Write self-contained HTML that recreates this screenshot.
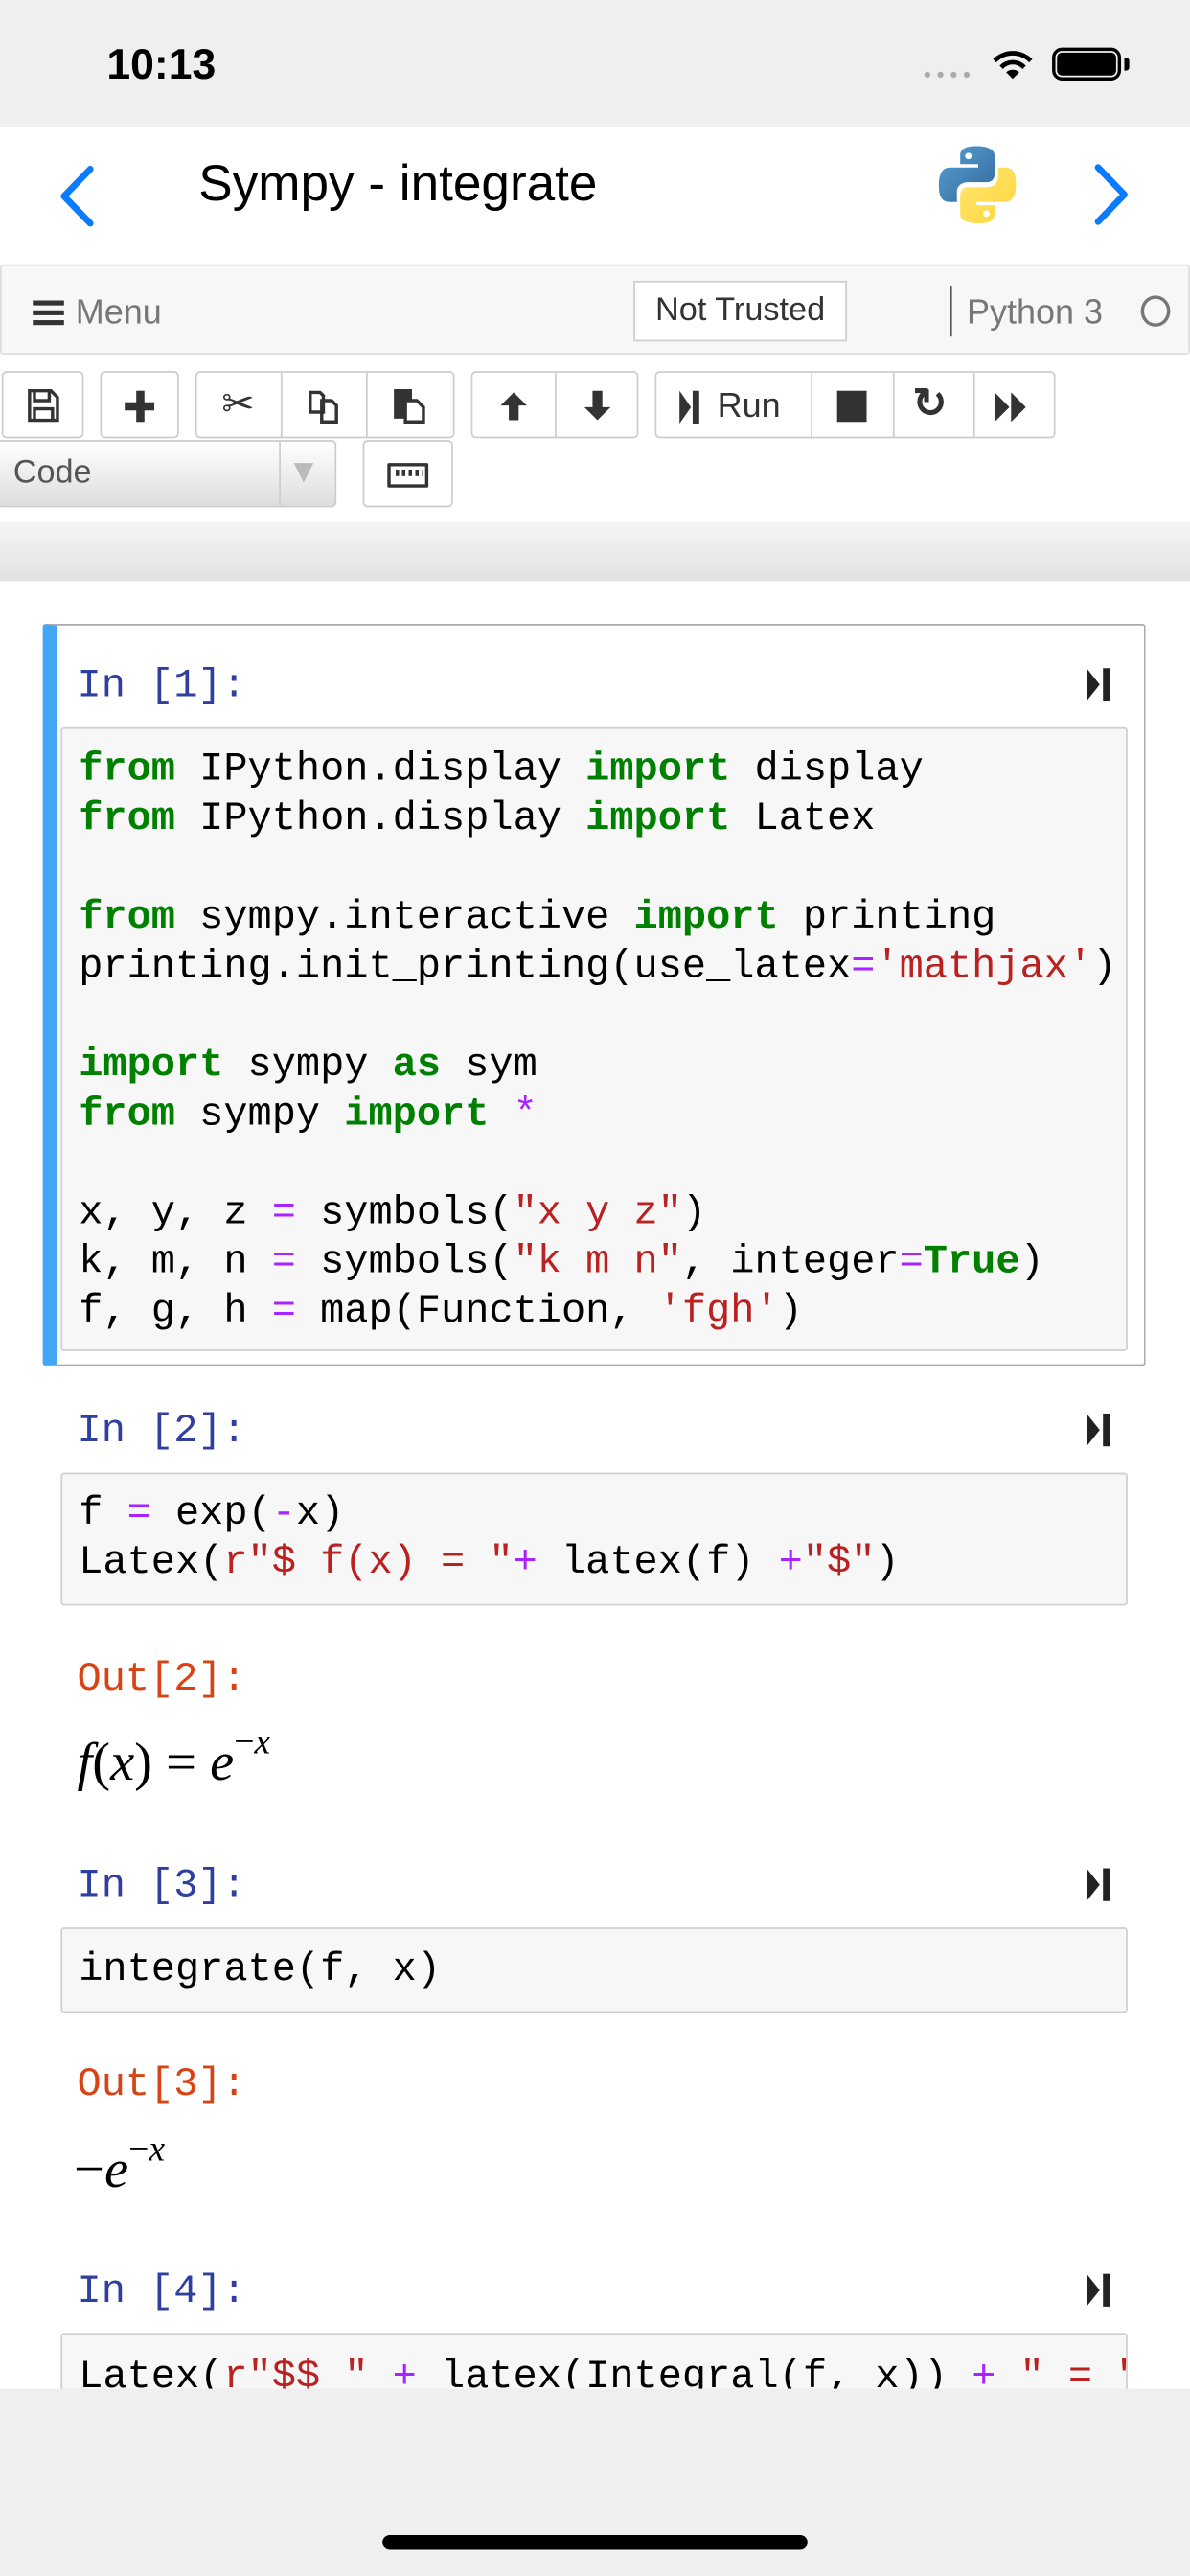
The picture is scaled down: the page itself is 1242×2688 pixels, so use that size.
<!DOCTYPE html>
<html><head><meta charset="utf-8"><style>
*{margin:0;padding:0;box-sizing:border-box}
html,body{width:1242px;height:2688px;overflow:hidden;background:#fff}
#w{position:absolute;left:0;top:0;width:725px;height:1569px;transform:scale(1.71310);transform-origin:0 0;font-family:"Liberation Sans",sans-serif;background:#fff}
.a{position:absolute}
.m{font-family:"Liberation Mono",monospace;font-size:24.5px;white-space:pre;line-height:30px}
.k{color:#008000;font-weight:bold}.s{color:#ba2121}.o{color:#aa22ff}
.pin{color:#303f9f}.pout{color:#d84315}
.btn{position:absolute;top:226px;height:41px;border:1px solid #ccc;border-radius:3px;background:#fff}
.sep{position:absolute;top:0;bottom:0;width:1px;background:#ccc}
.code{position:absolute;left:37px;right:38px;background:#f7f7f7;border:1px solid #cfcfcf;border-radius:2px}
.math{font-family:"Liberation Serif",serif;font-style:italic;font-size:33px}
</style></head><body><div id="w">
<div class="a" style="left:0;top:0;width:725px;height:77px;background:#efefef"></div>
<div class="a" style="left:65px;top:24px;font-size:26px;font-weight:bold;color:#000">10:13</div>
<div class="a" style="left:561px;top:43px;width:32px;height:5px;background:radial-gradient(circle,#aaa 1.6px,transparent 2px) 0 0/8px 5px"></div>
<svg class="a" style="left:602px;top:28px" width="30" height="22" viewBox="0 0 30 22"><path d="M15 20 L11 16 A6 6 0 0 1 19 16Z M7 12 A11 11 0 0 1 23 12 L21 14 A8 8 0 0 0 9 14Z M3 8 A17 17 0 0 1 27 8 L25 10 A14 14 0 0 0 5 10Z" fill="#000"/></svg>
<div class="a" style="left:641px;top:29px;width:42px;height:20px;border:2px solid #000;border-radius:6px"></div>
<div class="a" style="left:644px;top:32px;width:36px;height:14px;background:#000;border-radius:3px"></div>
<div class="a" style="left:685px;top:35px;width:3px;height:8px;background:#000;border-radius:0 2px 2px 0"></div>
<svg class="a" style="left:34px;top:100px" width="26" height="40" viewBox="0 0 26 40"><path d="M21 3 L5 19.5 L21 36" fill="none" stroke="#0a7aff" stroke-width="4" stroke-linecap="round" stroke-linejoin="round"/></svg>
<div class="a" style="left:121px;top:94px;font-size:31px;color:#000">Sympy - integrate</div>
<svg class="a" style="left:571px;top:88px" width="49" height="49" viewBox="0 0 49 49"><defs><linearGradient id="b" x1="0" y1="0" x2="1" y2="1"><stop offset="0" stop-color="#5a9fd4"/><stop offset="1" stop-color="#306998"/></linearGradient><linearGradient id="y" x1="0" y1="0" x2="1" y2="1"><stop offset="0" stop-color="#ffe873"/><stop offset="1" stop-color="#ffd43b"/></linearGradient></defs><path d="M24 1 C14 1 14 5 14 7 V12 H25 V14 H8 C3 14 1 18 1 25 C1 32 3 35 8 35 H12 V29 C12 25 15 23 19 23 H30 C33 23 35 21 35 18 V7 C35 3 31 1 24 1Z" fill="url(#b)"/><circle cx="19" cy="7" r="2" fill="#fff"/><path d="M25 48 C35 48 35 44 35 42 V37 H24 V35 H41 C46 35 48 31 48 24 C48 17 46 14 41 14 H37 V20 C37 24 34 26 30 26 H19 C16 26 14 28 14 31 V42 C14 46 18 48 25 48Z" fill="url(#y)"/><circle cx="30" cy="42" r="2" fill="#fff"/></svg>
<svg class="a" style="left:664px;top:98px" width="28" height="42" viewBox="0 0 28 42"><path d="M5 4 L21 20.5 L5 37" fill="none" stroke="#0a7aff" stroke-width="4" stroke-linecap="round" stroke-linejoin="round"/></svg>
<div class="a" style="left:0;top:161px;width:725px;height:55px;background:#f7f7f7;border:1px solid #ddd;border-radius:2px"></div>
<div class="a" style="left:20px;top:183px;width:19px;height:3px;background:#333;box-shadow:0 6px 0 #333,0 12px 0 #333"></div>
<div class="a" style="left:46px;top:179px;font-size:21px;color:#777">Menu</div>
<div class="a" style="left:386px;top:171px;width:130px;height:37px;background:#fff;border:1px solid #ccc;font-size:20px;color:#333;text-align:center;line-height:35px">Not Trusted</div>
<div class="a" style="left:579px;top:174px;width:1px;height:31px;background:#555"></div>
<div class="a" style="left:589px;top:179px;font-size:21px;color:#777">Python 3</div>
<div class="a" style="left:695px;top:180px;width:18px;height:19px;border:2.5px solid #777;border-radius:50%"></div>
<div class="btn" style="left:1px;width:50px"><svg style="position:absolute;left:13px;top:9px" width="22" height="22" viewBox="0 0 22 22"><path d="M3 2 H16 L20 6 V20 H3Z M6 2 V8 H15 V2 M6 20 V13 H17 V20" fill="none" stroke="#333" stroke-width="2"/></svg></div>
<div class="btn" style="left:61px;width:48px"><div class="a" style="left:14px;top:18px;width:18px;height:5px;background:#333"></div><div class="a" style="left:20.5px;top:11px;width:5px;height:19px;background:#333"></div></div>
<div class="btn" style="left:119px;width:158px"><div class="sep" style="left:51px"></div><div class="sep" style="left:103px"></div>
<div class="a" style="left:15px;top:5px;font-size:24px;color:#333">✂</div>
<svg class="a" style="left:65px;top:8px" width="24" height="24" viewBox="0 0 24 24"><path d="M4 4 H10 L12 6 V16 H4Z M11 9 H17 L20 12 V22 H11Z" fill="#fff" stroke="#333" stroke-width="2"/></svg>
<svg class="a" style="left:117px;top:8px" width="24" height="24" viewBox="0 0 24 24"><rect x="3" y="2" width="11" height="18" fill="#333"/><path d="M10 9 H17 L21 13 V22 H10Z" fill="#fff" stroke="#333" stroke-width="2"/></svg></div>
<div class="btn" style="left:287px;width:102px"><div class="sep" style="left:50px"></div>
<svg class="a" style="left:14px;top:9px" width="22" height="22" viewBox="0 0 22 22"><path d="M11 3 L3 11 H8 V20 H14 V11 H19Z" fill="#333"/></svg>
<svg class="a" style="left:65px;top:9px" width="22" height="22" viewBox="0 0 22 22"><path d="M11 20 L3 12 H8 V2 H14 V12 H19Z" fill="#333"/></svg></div>
<div class="btn" style="left:399px;width:244px"><div class="sep" style="left:94px"></div><div class="sep" style="left:144px"></div><div class="sep" style="left:193px"></div>
<svg class="a" style="left:13px;top:10px" width="16" height="22" viewBox="0 0 16 22"><path d="M1 1 L8 11 L1 21Z" fill="#333"/><rect x="9" y="1" width="4" height="20" fill="#333"/></svg>
<div class="a" style="left:37px;top:9px;font-size:21px;color:#333">Run</div>
<div class="a" style="left:110px;top:11px;width:18px;height:19px;background:#333"></div>
<div class="a" style="left:156px;top:4px;font-size:25px;font-weight:bold;color:#333">↻</div>
<svg class="a" style="left:205px;top:10px" width="24" height="22" viewBox="0 0 24 22"><path d="M1 2 L10 11 L1 20Z M11 2 L20 11 L11 20Z" fill="#333"/></svg></div>
<div class="a" style="left:-2px;top:268px;width:207px;height:41px;border:1px solid #ccc;border-radius:3px;background:linear-gradient(#fff,#ddd)"></div>
<div class="a" style="left:170px;top:269px;width:1px;height:39px;background:#ccc"></div>
<div class="a" style="left:8px;top:277px;font-size:20px;color:#555">Code</div>
<div class="a" style="left:179px;top:282px;width:0;height:0;border-left:6px solid transparent;border-right:6px solid transparent;border-top:12px solid #bbb"></div>
<div class="a" style="left:221px;top:268px;width:55px;height:41px;border:1px solid #ccc;border-radius:3px;background:#fff"></div>
<div class="a" style="left:236px;top:282px;width:25px;height:15px;border:2px solid #333;border-radius:1px;background:repeating-linear-gradient(90deg,#333 0 2px,#fff 2px 4px) 3px 2px/17px 4px no-repeat,#fff"></div>
<div class="a" style="left:0;top:318px;width:725px;height:36px;background:linear-gradient(#f5f5f5,#e2e2e2)"></div>

<div class="a" style="left:26px;top:380px;width:672px;height:452px;border:1px solid #ababab;border-radius:2px;border-left:9px solid #42a5f5"></div>
<div class="a m pin" style="left:47px;top:404px">In [1]:</div>
<svg class="a" style="left:661px;top:406px" width="18" height="22" viewBox="0 0 18 22"><path d="M1 1 L9 11 L1 21Z" fill="#222"/><rect x="11" y="1" width="4" height="20" fill="#222"/></svg>
<div class="code" style="top:443px;height:380px"></div>
<div class="a m" style="left:48px;top:455px"><span class="k">from</span> IPython.display <span class="k">import</span> display
<span class="k">from</span> IPython.display <span class="k">import</span> Latex

<span class="k">from</span> sympy.interactive <span class="k">import</span> printing
printing.init_printing(use_latex<span class="o">=</span><span class="s">'mathjax'</span>)

<span class="k">import</span> sympy <span class="k">as</span> sym
<span class="k">from</span> sympy <span class="k">import</span> <span class="o">*</span>

x, y, z <span class="o">=</span> symbols(<span class="s">"x y z"</span>)
k, m, n <span class="o">=</span> symbols(<span class="s">"k m n"</span>, integer<span class="o">=</span><span class="k">True</span>)
f, g, h <span class="o">=</span> map(Function, <span class="s">'fgh'</span>)</div>

<div class="a m pin" style="left:47px;top:858px">In [2]:</div>
<svg class="a" style="left:661px;top:860px" width="18" height="22" viewBox="0 0 18 22"><path d="M1 1 L9 11 L1 21Z" fill="#222"/><rect x="11" y="1" width="4" height="20" fill="#222"/></svg>
<div class="code" style="top:897px;height:81px"></div>
<div class="a m" style="left:48px;top:908px">f <span class="o">=</span> exp(<span class="o">-</span>x)
Latex(<span class="s">r"$ f(x) = "</span><span class="o">+</span> latex(f) <span class="o">+</span><span class="s">"$"</span>)</div>
<div class="a m pout" style="left:47px;top:1009px">Out[2]:</div>
<div class="a math" style="left:47px;top:1052px">f<span style="font-style:normal">(</span>x<span style="font-style:normal">) = </span>e<sup style="font-size:22px;position:relative;top:-4px"><span style="font-style:normal">−</span>x</sup></div>

<div class="a m pin" style="left:47px;top:1135px">In [3]:</div>
<svg class="a" style="left:661px;top:1137px" width="18" height="22" viewBox="0 0 18 22"><path d="M1 1 L9 11 L1 21Z" fill="#222"/><rect x="11" y="1" width="4" height="20" fill="#222"/></svg>
<div class="code" style="top:1174px;height:52px"></div>
<div class="a m" style="left:48px;top:1186px">integrate(f, x)</div>
<div class="a m pout" style="left:47px;top:1256px">Out[3]:</div>
<div class="a math" style="left:45px;top:1300px"><span style="font-style:normal">−</span>e<sup style="font-size:22px;position:relative;top:-4px"><span style="font-style:normal">−</span>x</sup></div>

<div class="a m pin" style="left:47px;top:1382px">In [4]:</div>
<svg class="a" style="left:661px;top:1384px" width="18" height="22" viewBox="0 0 18 22"><path d="M1 1 L9 11 L1 21Z" fill="#222"/><rect x="11" y="1" width="4" height="20" fill="#222"/></svg>
<div class="code" style="top:1421px;height:60px;overflow:hidden"><div class="m" style="position:absolute;left:10px;top:12px">Latex(<span class="s">r"$$ "</span> <span class="o">+</span> latex(Integral(f, x)) <span class="o">+</span> <span class="s">" = "</span></div></div>
<div class="a" style="left:0;top:1455px;width:725px;height:114px;background:#efefef"></div>
<div class="a" style="left:233px;top:1544px;width:259px;height:9px;background:#000;border-radius:5px"></div>
</div></body></html>
